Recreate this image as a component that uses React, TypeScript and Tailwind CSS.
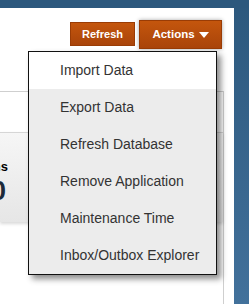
import React from 'react';

const menuItems = [
  'Import Data',
  'Export Data',
  'Refresh Database',
  'Remove Application',
  'Maintenance Time',
  'Inbox/Outbox Explorer',
];

const ActionsMenu: React.FC = () => (
  <div className="absolute left-[28px] top-[51px] w-[189px] border border-[#111] bg-[#ececec] shadow-[4px_4px_6px_rgba(0,0,0,0.45)]">
    {menuItems.map((label, i) => (
      <div
        key={label}
        className={`flex h-[37px] items-center pl-[31px] text-[14px] text-[#333] ${i === 0 ? 'bg-white' : ''}`}
      >
        {label}
      </div>
    ))}
  </div>
);

export default function App() {
  return (
    <div
      className="relative h-[304px] w-[249px] overflow-hidden bg-gradient-to-b from-[#2c587d] to-[#42719b]"
      style={{ fontFamily: '"Liberation Sans", Arial, sans-serif' }}
    >
      <div className="absolute inset-x-0 top-0 h-[8px] bg-[#2c587d]" />
      <div className="mt-[8px] flex h-[296px] w-[234px] flex-col bg-white">
        {/* toolbar */}
        <div className="flex h-[83px] items-start justify-end gap-[4px] pr-[12px] pt-[12px]">
          <button className="mt-[2px] h-[24px] w-[65px] border border-[#9a3c05] bg-gradient-to-b from-[#c4560d] to-[#a9440a] text-[11px] font-bold text-white">
            Refresh
          </button>
          <button className="flex h-[29px] w-[83px] items-center justify-center gap-[4px] border border-[#9a3c05] bg-gradient-to-b from-[#c4560d] to-[#a9440a] text-[11.5px] font-bold text-white shadow-[0_0_4px_rgba(0,0,0,0.35)]">
            <span>Actions</span>
            <svg width="10" height="6" viewBox="0 0 10 6">
              <path d="M0 0 L10 0 L5 6 Z" fill="#fff" />
            </svg>
          </button>
        </div>
        {/* content box */}
        <div className="flex-1 w-[224px] border-r border-t border-[#cfcfcf] pt-[40px]">
          <div className="flex h-[90px] flex-col border-t border-[#d6d6d6] bg-gradient-to-b from-[#f6f6f6] to-[#e6e6e6] shadow-[0_2px_3px_rgba(0,0,0,0.15)]">
            <div className="mt-[24px] flex w-[8px] justify-end overflow-hidden whitespace-nowrap text-[13px] font-bold text-black">
              Applications
            </div>
            <div className="flex w-[6px] justify-end overflow-hidden whitespace-nowrap text-[27px] font-bold leading-[28px] text-[#1c2a3a]">
              10
            </div>
          </div>
        </div>
      </div>
      <ActionsMenu />
    </div>
  );
}
